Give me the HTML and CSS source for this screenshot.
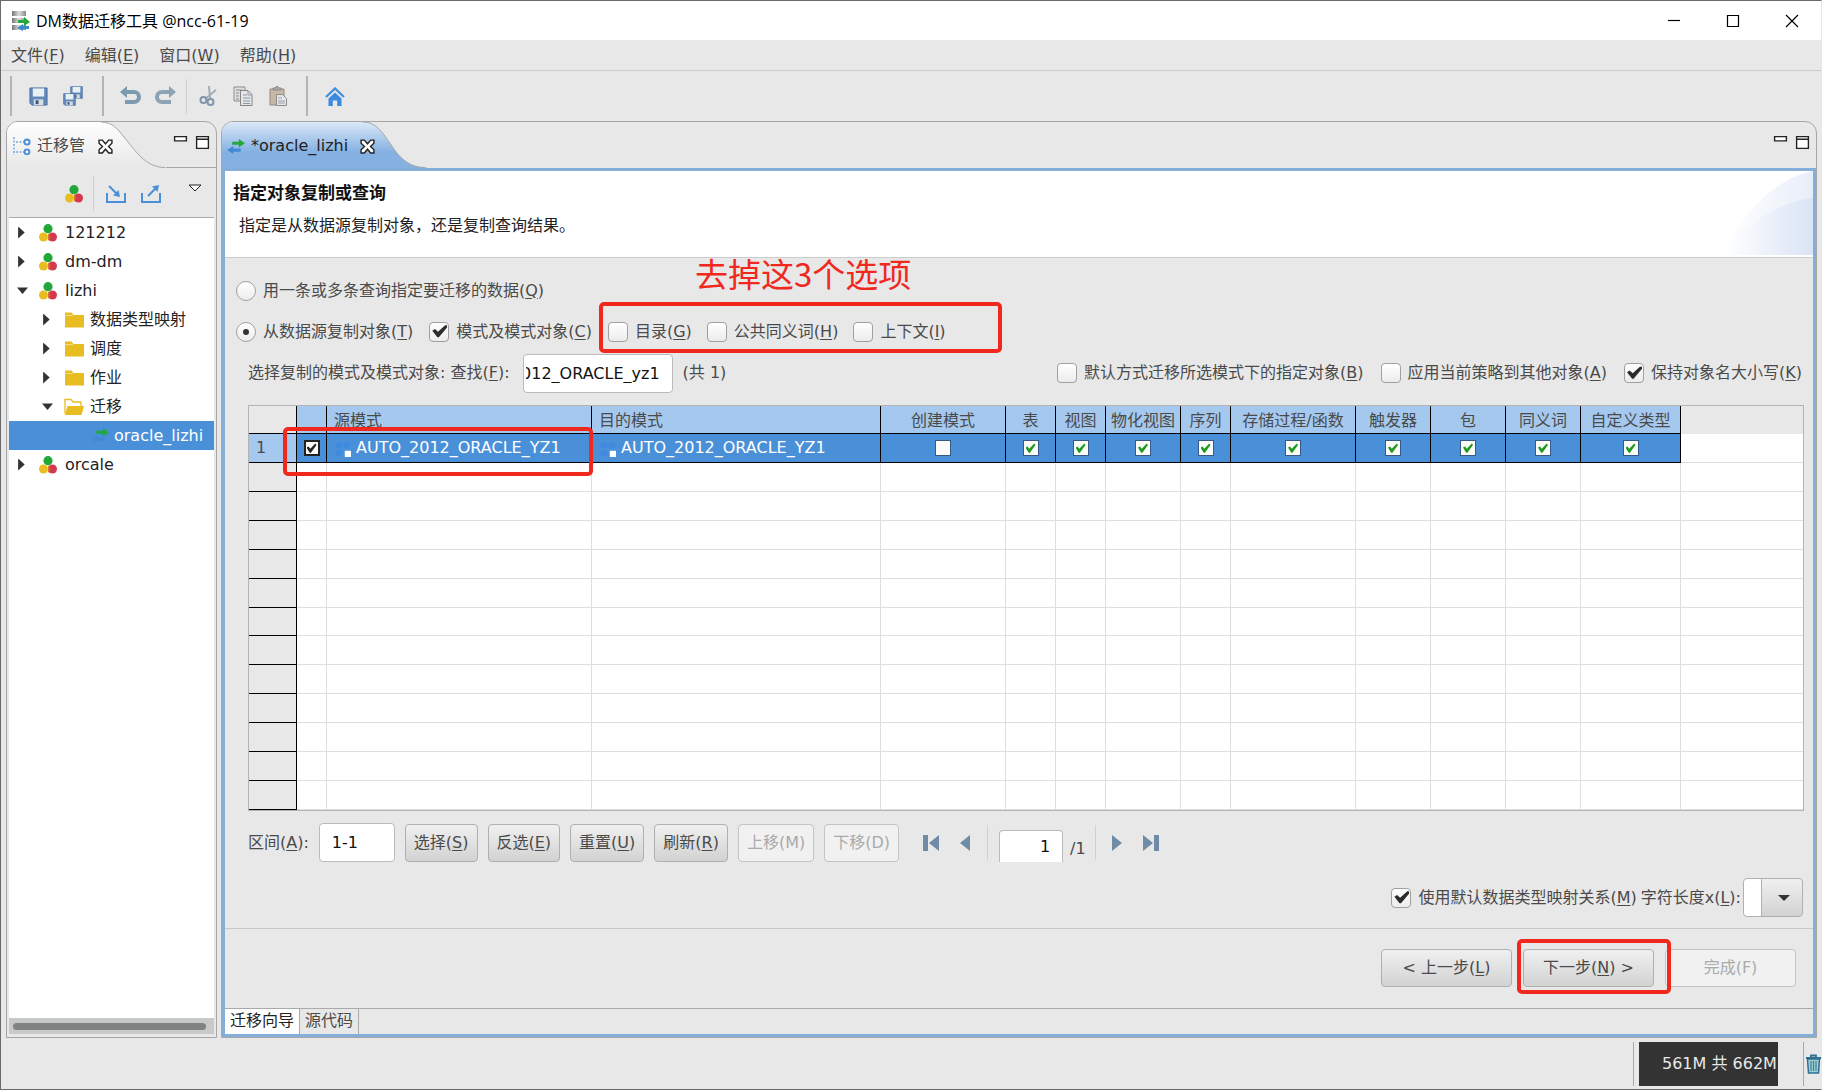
FILE: index.html
```html
<!DOCTYPE html>
<html lang="zh-CN">
<head>
<meta charset="utf-8">
<title>DM数据迁移工具 @ncc-61-19</title>
<link rel="stylesheet" href="styles.css">
</head>
<body>
<svg class="defs" aria-hidden="true">
  <defs>
    <linearGradient id="tabGrey" x1="0" y1="0" x2="0" y2="1"><stop offset="0" stop-color="#ffffff"/><stop offset="1" stop-color="#e8e8e8"/></linearGradient>
    <linearGradient id="tabBlue" x1="0" y1="0" x2="0" y2="1"><stop offset="0" stop-color="#dbe8f8"/><stop offset="0.65" stop-color="#85b1e2"/><stop offset="1" stop-color="#85b1e2"/></linearGradient>
    <linearGradient id="swirlA" x1="0" y1="0" x2="1" y2="0"><stop offset="0" stop-color="#ffffff"/><stop offset="1" stop-color="#e8eef9"/></linearGradient>
    <linearGradient id="swirlB" x1="0" y1="0" x2="1" y2="0"><stop offset="0" stop-color="#ffffff"/><stop offset="1" stop-color="#dae4f5"/></linearGradient>
    <linearGradient id="steel" x1="0" y1="0" x2="1" y2="0"><stop offset="0" stop-color="#777"/><stop offset="0.5" stop-color="#ddd"/><stop offset="1" stop-color="#888"/></linearGradient>
  </defs>
  <symbol id="i-balls" viewBox="0 0 18 18"><circle cx="9" cy="4.7" r="4.6" fill="#22a83a"/><circle cx="4.5" cy="13" r="4.5" fill="#e8bd22"/><circle cx="13.5" cy="13" r="4.5" fill="#d43a4e"/><path d="M9 9.200l2.400 3.800-2.400 4z" fill="#d9702e"/></symbol>
  <symbol id="i-folder" viewBox="0 0 20 18"><path d="M1 1.500h6.500l2 2.500H20v12.500H1z" fill="#e8bd22"/><path d="M1 4.500h8" stroke="#f3dc86" fill="none"/></symbol>
  <symbol id="i-open" viewBox="0 0 20 18"><path d="M1 15.500V1.500h6l2 2.500h8v4" fill="none" stroke="#e8bd22" stroke-width="1.300"/><path d="M3.500 8H20l-2.500 9H.8z" fill="#e8bd22"/></symbol>
  <symbol id="i-arrows" viewBox="0 0 20 16"><path d="M6 3h7V0l6.500 4.500L13 9V6H6z" fill="#22a83a"/><path d="M15 10H7V7.500L.5 11.700 7 16v-2.500h8z" fill="#4189d6"/></symbol>
  <symbol id="i-close" viewBox="0 0 14 14"><path d="M1 1h3l3 3.500L10 1h3v3L9.800 7l3.200 3v3h-3L7 9.500 4 13H1v-3l3.200-3L1 4z" fill="#fff" stroke="#222" stroke-width="1.300"/></symbol>
  <symbol id="i-min" viewBox="0 0 14 14"><path d="M1.500 1.500h11v4h-11z" fill="#fff" stroke="#222" stroke-width="1.300"/></symbol>
  <symbol id="i-max" viewBox="0 0 14 14"><path d="M1.500 1.500h11v11h-11zM1.500 4h11" fill="#fff" stroke="#222" stroke-width="1.300"/></symbol>
  <symbol id="i-save" viewBox="0 0 20 20"><path d="M1 1h18v18H3l-2-2z" fill="#6289b8" stroke="#446c9e"/><path d="M4 1.500h12V10H4z" fill="#e8f0f4"/><path d="M5 13h10v6H5z" fill="#d8dde2"/><path d="M7 14h3v4H7z" fill="#34557f"/></symbol>
  <symbol id="i-schema" viewBox="0 0 18 18"><path d="M1 1h7v7H1zM10 1h7v7h-7zM1 10h7v7H1z" fill="#3f8ade"/><path d="M11 11h7v7h-7z" fill="#fff"/></symbol>
</svg>

<div class="window">
  <header class="titlebar">
    <svg class="app-icon" viewBox="0 0 18 20"><path d="M0 0h14v5H0zM0 7h14v5H0zM0 14h14v5H0z" fill="url(#steel)"/><path d="M6 9h6V6l6 5-6 4v-3H6z" fill="#22a83a"/><path d="M17 15H11v-2l-6 4 6 3v-2h6z" fill="#3d87cc"/></svg>
    <h1>DM数据迁移工具 @ncc-61-19</h1>
    <div class="window-buttons">
      <button aria-label="最小化"><svg viewBox="0 0 14 14"><path d="M1 6.500h12"/></svg></button>
      <button aria-label="最大化"><svg viewBox="0 0 14 14"><path d="M1.500 1.500h11v11h-11z"/></svg></button>
      <button aria-label="关闭"><svg viewBox="0 0 14 14"><path d="M1 1l12 12M13 1L1 13"/></svg></button>
    </div>
  </header>

  <nav class="menubar">
    <a href="#">文件(<u>F</u>)</a><a href="#">编辑(<u>E</u>)</a><a href="#">窗口(<u>W</u>)</a><a href="#">帮助(<u>H</u>)</a>
  </nav>

  <div class="toolbar">
    <div class="tool-group">
      <button aria-label="保存"><svg width="19" height="19"><use href="#i-save"/></svg></button>
      <button aria-label="全部保存"><svg width="21" height="21" viewBox="0 0 21 21"><use href="#i-save" x="7" width="13" height="13"/><use href="#i-save" y="7" width="13" height="13"/></svg></button>
    </div>
    <div class="tool-group">
      <button aria-label="撤销"><svg width="21" height="20" viewBox="0 0 21 20"><path d="M4 6h10a5 5 0 0 1 0 10H5" fill="none" stroke="#7d9bb0" stroke-width="4"/><path d="M0 6l7-6v12z" fill="#7d9bb0"/></svg></button>
      <button aria-label="重做"><svg width="21" height="20" viewBox="0 0 21 20"><path d="M17 6H7a5 5 0 0 0 0 10h9" fill="none" stroke="#8ba3b3" stroke-width="4"/><path d="M21 6l-7-6v12z" fill="#8ba3b3"/></svg></button>
      <span class="divider"></span>
      <button aria-label="剪切"><svg width="18" height="20" viewBox="0 0 18 20"><path d="M10 0l1 12M17 4L6 13" stroke="#a4adb4" stroke-width="2" fill="none"/><circle cx="4.500" cy="14" r="3" fill="none" stroke="#7f95a7" stroke-width="2"/><circle cx="11.500" cy="16" r="3" fill="none" stroke="#7f95a7" stroke-width="2"/></svg></button>
      <button aria-label="复制"><svg width="20" height="20" viewBox="0 0 20 20"><path d="M1 1h11v14H1z" fill="#e0e0e0" stroke="#8d8d8d"/><path d="M3 4h6M3 7h3M3 10h3M3 13h3" stroke="#888"/><path d="M7.500 4.500H15l4 4v11H7.500z" fill="#e6e6e6" stroke="#858585"/><path d="M10 9h4M10 12h7M10 15h7M10 17.500h7M15 5v4h4" stroke="#8c98a6" fill="none"/></svg></button>
      <button aria-label="粘贴"><svg width="18" height="20" viewBox="0 0 18 20"><path d="M1 3h14v16H1z" fill="#c6b8a6" stroke="#948b80"/><path d="M4 4V2h2l2-2 2 2h2v2z" fill="#aaa" stroke="#888"/><path d="M7.500 8.500h6l4 4v7h-10z" fill="#e6e6e6" stroke="#8d8d8d"/><path d="M9 12h4M9 15h7M9 17h7" stroke="#98a2ad"/></svg></button>
    </div>
    <div class="tool-group">
      <button aria-label="主页"><svg width="20" height="19" viewBox="0 0 20 19"><path d="M1 10L10 1.500 19 10" fill="none" stroke="#4590dc" stroke-width="2.400"/><path d="M3.500 11.500L10 5.500l6.500 6V19h-4.300v-5.500H7.800V19H3.500z" fill="#3a8ade"/></svg></button>
    </div>
  </div>

  <main class="workspace">
    <aside class="pane navigator">
      <div class="tabstrip">
        <div class="tab">
          <svg width="18" height="18" viewBox="0 0 18 18"><path d="M1 0v18M3 5h8M3 15h8" fill="none" stroke="#6ea9e2" stroke-width="1.500" stroke-dasharray="2 1.500"/><circle cx="14" cy="5" r="2.600" fill="#fff" stroke="#4a90d9" stroke-width="2"/><circle cx="14" cy="15" r="2.400" fill="#fff" stroke="#4a90d9" stroke-width="2"/></svg>
          <span class="tab-name">迁移管</span>
          <button class="close" aria-label="关闭"><svg width="15" height="15"><use href="#i-close"/></svg></button>
        </div>
        <svg class="tail" viewBox="0 0 64 46"><path d="M0 0C13 0 18 9 27 20S46 45.500 64 45.500V46H0z" fill="url(#tabGrey)"/><path d="M0 0C13 0 18 9 27 20S46 45.500 64 45.500" fill="none" stroke="#a6a6a6"/></svg>
        <div class="pane-buttons"><button aria-label="最小化"><svg width="15" height="15"><use href="#i-min"/></svg></button><button aria-label="最大化"><svg width="15" height="15"><use href="#i-max"/></svg></button></div>
      </div>
      <div class="nav-tools">
        <button aria-label="新建"><svg width="18" height="18"><use href="#i-balls"/></svg></button>
        <span class="divider"></span>
        <button aria-label="导入"><svg width="20" height="18" viewBox="0 0 20 18"><path d="M1 8v9h18V8M3 1l9 9" fill="none" stroke="#4a90d9" stroke-width="2"/><path d="M14 12l-7-1.500L12.500 5z" fill="#4a90d9"/></svg></button>
        <button aria-label="导出"><svg width="20" height="18" viewBox="0 0 20 18"><path d="M1 8v9h18V8M7 11l9-9" fill="none" stroke="#4a90d9" stroke-width="2"/><path d="M18 0l-1.500 7L11 1.500z" fill="#4a90d9"/></svg></button>
        <button class="view-menu" aria-label="菜单"><svg width="14" height="8" viewBox="0 0 14 8"><path d="M1 1h12L7 7z" fill="#fff" stroke="#222"/></svg></button>
      </div>
      <ul class="tree">
        <li><i class="arrow"></i><svg><use href="#i-balls"/></svg>121212</li>
        <li><i class="arrow"></i><svg><use href="#i-balls"/></svg>dm-dm</li>
        <li><i class="arrow down"></i><svg><use href="#i-balls"/></svg>lizhi</li>
        <li class="child"><i class="arrow"></i><svg><use href="#i-folder"/></svg>数据类型映射</li>
        <li class="child"><i class="arrow"></i><svg><use href="#i-folder"/></svg>调度</li>
        <li class="child"><i class="arrow"></i><svg><use href="#i-folder"/></svg>作业</li>
        <li class="child"><i class="arrow down"></i><svg><use href="#i-open"/></svg>迁移</li>
        <li class="leaf selected"><svg><use href="#i-arrows"/></svg>oracle_lizhi</li>
        <li><i class="arrow"></i><svg><use href="#i-balls"/></svg>orcale</li>
      </ul>
      <div class="scrollbar"><span></span></div>
    </aside>

    <section class="pane editor">
      <div class="tabstrip">
        <div class="tab">
          <svg width="20" height="15"><use href="#i-arrows"/></svg>
          <span class="tab-name">*oracle_lizhi</span>
          <button class="close" aria-label="关闭"><svg width="15" height="15"><use href="#i-close"/></svg></button>
        </div>
        <svg class="tail" viewBox="0 0 64 46"><path d="M0 0C13 0 19 10 26 20S42 45.500 62 45.500H64V46H0z" fill="url(#tabBlue)"/><path d="M0 0C13 0 19 10 26 20S42 45.500 62 45.500" fill="none" stroke="#a6a6a6"/></svg>
        <div class="pane-buttons"><button aria-label="最小化"><svg width="15" height="15"><use href="#i-min"/></svg></button><button aria-label="最大化"><svg width="15" height="15"><use href="#i-max"/></svg></button></div>
      </div>

      <div class="editor-body">
        <div class="banner">
          <div>
            <h2>指定对象复制或查询</h2>
            <p>指定是从数据源复制对象，还是复制查询结果。</p>
          </div>
          <svg class="swirl" viewBox="0 0 90 84"><path d="M0 84C18 45 50 8 90 0V84z" fill="url(#swirlA)"/><path d="M0 84C22 55 50 32 90 27V84z" fill="url(#swirlB)"/></svg>
        </div>

        <form class="form">
          <div class="row mode-row">
            <label class="opt"><input type="radio" name="mode"><span>用一条或多条查询指定要迁移的数据(<u>Q</u>)</span></label>
          </div>
          <div class="row mode-row">
            <label class="opt"><input type="radio" name="mode" checked><span>从数据源复制对象(<u>T</u>)</span></label>
            <label class="opt"><input type="checkbox" checked><span>模式及模式对象(<u>C</u>)</span></label>
            <div class="extras">
              <label class="opt"><input type="checkbox"><span>目录(<u>G</u>)</span></label>
              <label class="opt"><input type="checkbox"><span>公共同义词(<u>H</u>)</span></label>
              <label class="opt"><input type="checkbox"><span>上下文(<u>I</u>)</span></label>
              <strong class="note">去掉这3个选项</strong>
              <span class="mark mark-extras"></span>
            </div>
          </div>
          <div class="row search-row">
            <label for="find">选择复制的模式及模式对象: 查找(<u>F</u>):</label>
            <input class="field find" id="find" type="text" value="AUTO_2012_ORACLE_yz1">
            <span>(共 1)</span>
            <div class="right-opts">
              <label class="opt"><input type="checkbox"><span>默认方式迁移所选模式下的指定对象(<u>B</u>)</span></label>
              <label class="opt"><input type="checkbox"><span>应用当前策略到其他对象(<u>A</u>)</span></label>
              <label class="opt"><input type="checkbox" checked><span>保持对象名大小写(<u>K</u>)</span></label>
            </div>
          </div>

          <div class="grid">
            <table>
              <colgroup><col class="w48"><col class="w30"><col class="w265"><col class="w289"><col class="w125"><col class="w50"><col class="w50"><col class="w75"><col class="w50"><col class="w125"><col class="w75"><col class="w75"><col class="w75"><col class="w100"><col></colgroup>
              <thead>
                <tr><th></th><th></th><th class="text">源模式</th><th class="text">目的模式</th><th>创建模式</th><th>表</th><th>视图</th><th>物化视图</th><th>序列</th><th>存储过程/函数</th><th>触发器</th><th>包</th><th>同义词</th><th>自定义类型</th><th></th></tr>
              </thead>
              <tbody>
                <tr class="picked"><th>1</th><td><input class="dark" type="checkbox" aria-label="选择" checked></td>
                  <td class="text"><svg><use href="#i-schema"/></svg>AUTO_2012_ORACLE_YZ1</td>
                  <td class="text"><svg><use href="#i-schema"/></svg>AUTO_2012_ORACLE_YZ1</td>
                  <td><input type="checkbox" aria-label="创建模式"></td><td><input type="checkbox" aria-label="表" checked></td><td><input type="checkbox" aria-label="视图" checked></td><td><input type="checkbox" aria-label="物化视图" checked></td><td><input type="checkbox" aria-label="序列" checked></td><td><input type="checkbox" aria-label="存储过程/函数" checked></td><td><input type="checkbox" aria-label="触发器" checked></td><td><input type="checkbox" aria-label="包" checked></td><td><input type="checkbox" aria-label="同义词" checked></td><td><input type="checkbox" aria-label="自定义类型" checked></td><td></td></tr>
                <tr><th></th><td></td><td></td><td></td><td></td><td></td><td></td><td></td><td></td><td></td><td></td><td></td><td></td><td></td><td></td></tr>
                <tr><th></th><td></td><td></td><td></td><td></td><td></td><td></td><td></td><td></td><td></td><td></td><td></td><td></td><td></td><td></td></tr>
                <tr><th></th><td></td><td></td><td></td><td></td><td></td><td></td><td></td><td></td><td></td><td></td><td></td><td></td><td></td><td></td></tr>
                <tr><th></th><td></td><td></td><td></td><td></td><td></td><td></td><td></td><td></td><td></td><td></td><td></td><td></td><td></td><td></td></tr>
                <tr><th></th><td></td><td></td><td></td><td></td><td></td><td></td><td></td><td></td><td></td><td></td><td></td><td></td><td></td><td></td></tr>
                <tr><th></th><td></td><td></td><td></td><td></td><td></td><td></td><td></td><td></td><td></td><td></td><td></td><td></td><td></td><td></td></tr>
                <tr><th></th><td></td><td></td><td></td><td></td><td></td><td></td><td></td><td></td><td></td><td></td><td></td><td></td><td></td><td></td></tr>
                <tr><th></th><td></td><td></td><td></td><td></td><td></td><td></td><td></td><td></td><td></td><td></td><td></td><td></td><td></td><td></td></tr>
                <tr><th></th><td></td><td></td><td></td><td></td><td></td><td></td><td></td><td></td><td></td><td></td><td></td><td></td><td></td><td></td></tr>
                <tr><th></th><td></td><td></td><td></td><td></td><td></td><td></td><td></td><td></td><td></td><td></td><td></td><td></td><td></td><td></td></tr>
                <tr><th></th><td></td><td></td><td></td><td></td><td></td><td></td><td></td><td></td><td></td><td></td><td></td><td></td><td></td><td></td></tr>
                <tr><th></th><td></td><td></td><td></td><td></td><td></td><td></td><td></td><td></td><td></td><td></td><td></td><td></td><td></td><td></td></tr>
              </tbody>
            </table>
            <span class="mark mark-row"></span>
          </div>

          <div class="row action-row">
            <label for="range">区间(<u>A</u>):</label>
            <input class="field range" id="range" type="text" value="1-1">
            <button type="button" class="btn">选择(<u>S</u>)</button>
            <button type="button" class="btn">反选(<u>E</u>)</button>
            <button type="button" class="btn">重置(<u>U</u>)</button>
            <button type="button" class="btn">刷新(<u>R</u>)</button>
            <button type="button" class="btn" disabled>上移(M)</button>
            <button type="button" class="btn" disabled>下移(D)</button>
            <div class="pager">
              <button type="button" aria-label="首页"><svg width="16" height="16" viewBox="0 0 16 16"><path d="M0 0h5v16H0zM16 0v16L6 8z"/></svg></button>
              <button type="button" aria-label="上一页"><svg width="10" height="16" viewBox="0 0 10 16"><path d="M10 0v16L0 8z"/></svg></button>
              <span class="divider"></span>
              <input class="field page" type="text" value="1" aria-label="页码">
              <span class="total">/1</span>
              <span class="divider"></span>
              <button type="button" aria-label="下一页"><svg width="10" height="16" viewBox="0 0 10 16"><path d="M0 0v16l10-8z"/></svg></button>
              <button type="button" aria-label="末页"><svg width="16" height="16" viewBox="0 0 16 16"><path d="M0 0v16l10-8zM11 0h5v16h-5z"/></svg></button>
            </div>
          </div>

          <div class="row mapping-row">
            <label class="opt"><input type="checkbox" checked><span>使用默认数据类型映射关系(<u>M</u>)</span></label>
            <label for="len">字符长度x(<u>L</u>):</label>
            <span class="combo"><select id="len"><option></option></select></span>
          </div>
        </form>

        <div class="wizard">
          <button class="btn">&lt; 上一步(<u>L</u>)</button>
          <span class="next"><button class="btn">下一步(<u>N</u>) &gt;</button><span class="mark mark-next"></span></span>
          <button class="btn" disabled>完成(F)</button>
        </div>
        <nav class="pages"><a class="current" href="#">迁移向导</a><a href="#">源代码</a></nav>
      </div>
    </section>
  </main>

  <footer class="statusbar">
    <span class="heap"><span>561M 共 662M</span></span>
    <button class="gc" aria-label="回收内存"><svg width="15" height="20" viewBox="0 0 15 20"><path d="M1.500 5h12l-1 14h-10z" fill="#9fd0d0" stroke="#2f6f92" stroke-width="1.500"/><path d="M5 7v10M7.500 7v10M10 7v10" stroke="#3f7fa0" stroke-width="1.200"/><path d="M0 4h15M5 3.500V1.500h5v2" fill="none" stroke="#2f6f92" stroke-width="1.800"/></svg></button>
  </footer>
</div>
</body>
</html>
```

FILE: styles.css
```css
* { box-sizing: border-box; }

body {
  margin: 0;
  background: #e8e8e8;
  color: #4a4a4a;
  font: 16px/20px "DejaVu Sans", "Noto Sans CJK SC", sans-serif;
}

button, input, select { font: inherit; color: inherit; margin: 0; }
button { padding: 0; border: 0; background: none; }
a { color: inherit; text-decoration: none; }
u { text-underline-offset: 2px; }
svg { display: block; flex: none; }
.defs { position: absolute; width: 0; height: 0; }
h1, h2, p, ul { margin: 0; padding: 0; }

.window {
  display: flex;
  flex-direction: column;
  height: 100vh;
  border: 1px solid #6a6a6a;
  border-right-color: #e8e8e8;
  overflow: hidden;
}

/* Title bar */
.titlebar {
  display: flex;
  align-items: center;
  flex: none;
  height: 39px;
  padding-left: 11px;
  background: #fff;
  color: #000;
}
.app-icon { width: 18px; height: 20px; margin-right: 6px; }
.titlebar h1 {
  flex: 1;
  font: 400 16px/20px "Open Sans", "Noto Sans CJK SC", sans-serif;
}
.window-buttons { display: flex; }
.window-buttons button {
  display: flex;
  justify-content: center;
  align-items: center;
  width: 59px;
  height: 39px;
}
.window-buttons svg { width: 14px; height: 14px; fill: none; stroke: #000; stroke-width: 1.2; }

.menubar {
  display: flex;
  align-items: center;
  flex: none;
  gap: 20px;
  height: 31px;
  padding: 1px 0 0 10px;
  border-bottom: 1px solid #ccc;
}

.toolbar { display: flex; align-items: center; flex: none; height: 50px; padding-left: 9px; }
.tool-group {
  display: flex;
  align-items: center;
  height: 40px;
  padding: 0 11px 0 9px;
  border-left: 2px solid #b4b4b4;
}
.tool-group button { display: flex; justify-content: center; width: 35px; }
.divider { width: 1px; height: 35px; margin: 0 3px; background: #d0d0d0; }

/* Panes */
.workspace { display: flex; flex: 1; gap: 4px; min-height: 0; padding: 0 4px 0 5px; }
.pane {
  display: flex;
  flex-direction: column;
  min-width: 0;
  border: 1px solid #a6a6a6;
  border-radius: 12px 12px 0 0;
  overflow: hidden;
}
.navigator { flex: none; width: 211px; padding-bottom: 3px; }
.editor { flex: 1; }

.tabstrip { display: flex; flex: none; height: 46px; }
.navigator .tabstrip { background: linear-gradient(#a6a6a6, #a6a6a6) right bottom / 50px 1px no-repeat; }
.tab { position: relative; z-index: 1; display: flex; align-items: center; padding-top: 2px; }
.tab::before {
  content: "";
  position: absolute;
  inset: 0 12px 0 0;
  z-index: -1;
}
.navigator .tab { padding-left: 6px; }
.navigator .tab::before { background: linear-gradient(#fff, #e8e8e8); }
.navigator .tab-name { width: 48px; margin: 0 13px 0 6px; }
.editor .tab { padding-left: 4px; color: #222; }
.editor .tab::before { background: linear-gradient(#dbe8f8, #85b1e2 65%); }
.editor .tab-name { margin: 0 12px 0 5px; }
.tail { width: 64px; height: 46px; margin-left: -12px; }
.pane-buttons { display: flex; gap: 7px; margin: 13px 6px 0 auto; height: 15px; }

.nav-tools {
  display: flex;
  align-items: center;
  flex: none;
  height: 50px;
  padding: 2px 12px 0 56px;
  margin: 0 2px;
  border-bottom: 1px solid #aaa;
}
.nav-tools .divider { margin: 0 12px 0 10px; }
.nav-tools button + button { margin-left: 15px; }
.nav-tools .view-menu { margin: -12px 0 0 auto; }

.tree {
  flex: 1;
  margin: 0 2px;
  background: #fff;
  color: #222;
  list-style: none;
  white-space: nowrap;
}
.tree li { display: flex; align-items: center; height: 29px; padding-left: 8px; }
.tree li svg { width: 18px; height: 18px; margin: 0 8px 0 11px; }
.tree .child { padding-left: 33px; }
.tree .child svg { width: 20px; margin: 0 6px 0 11px; }
.tree .leaf { padding-left: 71px; }
.tree .leaf svg { width: 20px; height: 15px; margin: 0 4px 0 10px; }
.tree .selected { background: #4a90d9; color: #fff; }
.arrow {
  flex: none;
  width: 11px;
  height: 12px;
  background: #333;
  clip-path: polygon(10% 0, 70% 50%, 10% 100%);
}
.arrow.down { clip-path: polygon(0 25%, 100% 25%, 50% 80%); }

.scrollbar { flex: none; height: 16px; margin: 0 2px; padding: 5px 8px 4px 4px; background: #c8cac9; }
.scrollbar span { display: block; height: 7px; border-radius: 4px; background: #7f8483; }

.editor-body {
  display: flex;
  flex-direction: column;
  flex: 1;
  min-height: 0;
  border: 3px solid #86aedb;
}

.banner {
  display: flex;
  justify-content: space-between;
  flex: none;
  height: 87px;
  padding-left: 8px;
  border-bottom: 1px solid #ccc;
  background: #fff;
  color: #222;
}
.banner h2 { margin-top: 12px; color: #111; font-size: 17px; line-height: 20px; }
.banner p { margin: 13px 0 0 6px; }
.swirl { width: 90px; height: 84px; }

/* Form */
.form { display: flex; flex-direction: column; flex: 1; min-height: 0; padding: 12px 9px 11px 23px; }
.row { display: flex; align-items: center; flex: none; white-space: nowrap; }
.opt { display: flex; align-items: center; gap: 7px; }
.opt span { flex: none; }
.mode-row { gap: 16px; height: 41px; margin-left: -12px; }
.extras { position: relative; display: flex; gap: 15px; }

.opt input {
  position: relative;
  flex: none;
  appearance: none;
  width: 20px;
  height: 20px;
  border: 1px solid #a0a0a0;
  border-radius: 4px;
  background: linear-gradient(#fff, #ececec);
}
.opt input[type="radio"] { border-radius: 50%; }
.opt input[type="radio"]:checked::after {
  content: "";
  position: absolute;
  inset: 6px;
  border-radius: 50%;
  background: #333;
}
.opt input[type="checkbox"]:checked::after {
  content: "";
  position: absolute;
  inset: 2px 1px 3px 2px;
  background: #2c2c2c;
  clip-path: polygon(0 48%, 18% 34%, 38% 56%, 86% 6%, 100% 6%, 100% 22%, 44% 98%, 34% 98%);
}

.field {
  padding: 0 12px;
  border: 1px solid #bbb;
  border-radius: 4px;
  background: #fff;
  color: #111;
}
.search-row { height: 40px; margin: 1px 0 12px; }
.find { width: 150px; height: 39px; margin: 0 10px 0 13px; padding-left: 2px; direction: rtl; }
.right-opts { display: flex; gap: 17px; margin: 0 2px 0 auto; }

/* Schema table */
.grid { position: relative; flex: 1; min-height: 0; border: 1px solid #b4b4b4; background: #fff; }
table { width: 100%; height: 100%; border-collapse: separate; border-spacing: 0; table-layout: fixed; }
th, td {
  padding: 0;
  border: solid #dedede;
  border-width: 0 1px 1px 0;
  font-weight: 400;
  line-height: 20px;
  text-align: center;
  white-space: nowrap;
}
th { border-color: #000; background: #a4c8ee; }
tr { height: 28px; }
thead th { padding-top: 3px; }
thead th:first-child, thead th:last-child, tbody th { background: #e8e8e8; }
thead th:last-child { border: 0; }
td:last-child { border-right: 0; }
.text { padding-left: 7px; text-align: left; }
.picked th { padding-right: 23px; background: #a4c8ee; }
.picked td { border-color: #000; background: #4a90d9; color: #fff; }
.picked td:last-child { border-color: #dedede; background: #fff; }
.picked svg { display: inline-block; width: 16px; height: 16px; margin: 0 5px 0 1px; vertical-align: -4px; }
.picked input {
  position: relative;
  display: block;
  appearance: none;
  width: 16px;
  height: 16px;
  margin: 0 auto;
  border: 1px solid #35598a;
  background: #fbfbf8;
}
.picked input.dark { border: 2px solid #222; }
.picked input:checked::after {
  content: "";
  position: absolute;
  inset: 2px;
  background: #1f9a1f;
  clip-path: polygon(0 45%, 20% 35%, 38% 58%, 88% 5%, 100% 20%, 42% 100%, 30% 95%);
}
.picked input.dark::after { inset: 1px; background: #222; }

.w30 { width: 30px; }
.w48 { width: 48px; }
.w50 { width: 50px; }
.w75 { width: 75px; }
.w100 { width: 100px; }
.w125 { width: 125px; }
.w265 { width: 265px; }
.w289 { width: 289px; }

/* Buttons and pager */
.btn {
  height: 38px;
  padding: 0 8px;
  border: 1px solid #b0b0b0;
  border-radius: 4px;
  background: linear-gradient(#f0f0f0, #d2d2d2);
  white-space: nowrap;
}
.btn:disabled { border-color: #c4c4c4; background: #f1f1f1; color: #aaa; }
.action-row { gap: 10px; margin-top: 12px; height: 39px; }
.range { width: 76px; height: 39px; }
.pager { display: flex; align-items: center; height: 39px; margin-left: 14px; }
.pager button { width: 16px; }
.pager button svg { margin: 0 auto; fill: #6f8ba6; }
.pager button + button { margin-left: 18px; }
.pager .divider { margin: 0 11px 0 14px; }
.page {
  align-self: flex-end;
  width: 64px;
  height: 32px;
  border-bottom: 0;
  border-radius: 4px 4px 0 0;
  text-align: right;
}
.total { margin: 12px 0 0 7px; }
.pager .total + .divider { margin: 0 13px 0 9px; }

.mapping-row { justify-content: flex-end; margin: 16px 1px 0 0; height: 39px; }
.mapping-row .opt { margin-right: 4px; }
.combo { position: relative; margin-left: 2px; }
.combo select {
  display: block;
  appearance: none;
  width: 60px;
  height: 39px;
  border: 1px solid #b0b0b0;
  border-radius: 4px;
  background: linear-gradient(90deg, #fff 17px, #b0b0b0 17px, #b0b0b0 18px, transparent 18px), linear-gradient(#f0f0f0, #d2d2d2);
}
.combo::after {
  content: "";
  position: absolute;
  top: 17px;
  right: 13px;
  width: 12px;
  height: 6px;
  background: #333;
  clip-path: polygon(0 0, 100% 0, 50% 100%);
}

.wizard {
  display: flex;
  justify-content: flex-end;
  flex: none;
  gap: 11px;
  height: 81px;
  padding: 20px 17px 0 0;
  border: solid #c8c8c8;
  border-width: 1px 0;
  border-bottom-color: #aaa;
}
.wizard .btn { width: 131px; }
.next { position: relative; height: 38px; }

.pages { display: flex; flex: none; height: 25px; }
.pages a { padding: 2px 5px; border-right: 1px solid #aaa; }
.pages .current { background: #fff; color: #222; }

/* Red callouts drawn over the controls */
.mark { position: absolute; border: 4px solid #f0281e; border-radius: 5px; pointer-events: none; }
.mark-extras { inset: -20px -56px -11px -9px; }
.mark-row { top: 21px; left: 34px; width: 310px; height: 49px; }
.mark-next { inset: -10px -17px -7px -6px; }
.note {
  position: absolute;
  top: -69px;
  left: 87px;
  color: #f0281e;
  font: 400 33px/40px "Noto Sans CJK SC", sans-serif;
}

/* Status bar */
.statusbar {
  display: flex;
  justify-content: flex-end;
  flex: none;
  height: 51px;
  padding: 4px 0 3px;
}
.heap {
  width: 165px;
  margin-right: 5px;
  padding-left: 5px;
  border-left: 1px solid #aaa;
}
.heap span {
  display: block;
  width: 139px;
  padding: 11px 0 11px 23px;
  background: #333;
  color: #e8e8e8;
  line-height: 22px;
  white-space: nowrap;
}
.gc { display: flex; align-items: center; width: 18px; padding-left: 2px; border-left: 1px solid #aaa; }
```
